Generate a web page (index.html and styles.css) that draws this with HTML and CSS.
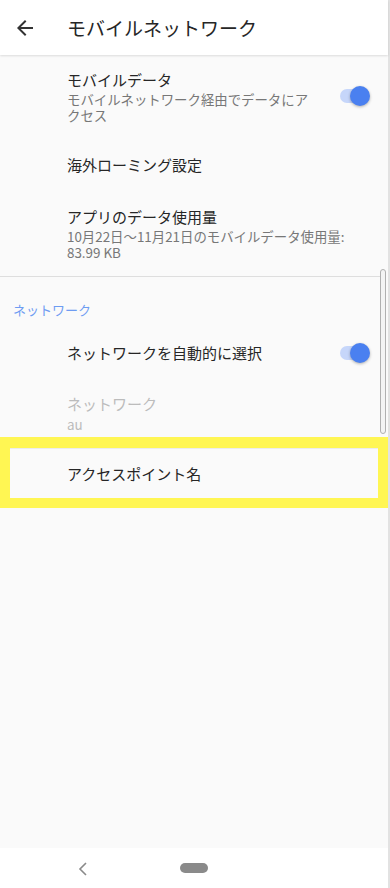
FILE: index.html
```html
<!DOCTYPE html>
<html>

<head>
    <meta charset="utf-8">
    <title>モバイルネットワーク</title>
    <link rel="stylesheet" href="styles.css">
</head>

<body>
<div class="page">
    <div class="toolbar">
        <svg class="back" width="24" height="24" viewBox="0 0 24 24">
            <path d="M20 11H7.83l5.59-5.59L12 4l-8 8 8 8 1.41-1.41L7.83 13H20v-2z" fill="#333"/>
        </svg>
        <div class="toolbar-title">モバイルネットワーク</div>
    </div>

    <div class="content">
        <!-- モバイルデータ -->
        <div class="row row-two">
            <div class="text">
                <div class="title">モバイルデータ</div>
                <div class="summary">モバイルネットワーク経由でデータにアクセス</div>
            </div>
            <div class="switch"><span class="track"></span><span class="thumb"></span></div>
        </div>
        <div class="row row-one">
            <div class="text">
                <div class="title">海外ローミング設定</div>
            </div>
        </div>
        <div class="row row-usage">
            <div class="text">
                <div class="title">アプリのデータ使用量</div>
                <div class="summary wide">10月22日～11月21日のモバイルデータ使用量: 83.99 KB</div>
            </div>
        </div>

        <div class="divider"></div>

        <!-- ネットワーク -->
        <div class="category">ネットワーク</div>
        <div class="row row-one">
            <div class="text">
                <div class="title">ネットワークを自動的に選択</div>
            </div>
            <div class="switch"><span class="track"></span><span class="thumb"></span></div>
        </div>
        <div class="row row-disabled">
            <div class="text">
                <div class="title">ネットワーク</div>
                <div class="summary">au</div>
            </div>
        </div>
        <div class="highlight">
            <div class="highlight-inner">アクセスポイント名</div>
        </div>

        <div class="scrollbar"></div>
    </div>

    <div class="navbar">
        <svg class="nav-back" width="12" height="14" viewBox="0 0 12 14">
            <polyline points="9,1 3,7 9,13" fill="none" stroke="#8a8a8a" stroke-width="1.6"/>
        </svg>
        <span class="home-pill"></span>
    </div>
</div>
</body>

</html>
```

FILE: styles.css
```css
* {
    margin: 0;
    padding: 0;
    box-sizing: border-box;
}
body {
    font-family: "Noto Sans CJK JP", "Noto Sans", Roboto, sans-serif;
    background: #fafafa;
}
.page {
    width: 390px;
    height: 888px;
    display: flex;
    flex-direction: column;
    border-right: 2px solid #e2e2e2;
    background: #fafafa;
}
.toolbar {
    height: 55px;
    flex-shrink: 0;
    background: #fff;
    display: flex;
    align-items: center;
    box-shadow: 0 1px 2px rgba(0, 0, 0, 0.12);
    position: relative;
    z-index: 1;
}
.back {
    margin-left: 13px;
    margin-top: 0;
}
.toolbar-title {
    margin-left: 30px;
    font-size: 19px;
    color: #262626;
    line-height: 24px;
}
.content {
    flex: 1;
    position: relative;
}
.row {
    display: flex;
    align-items: center;
    padding: 0 16px 0 67px;
}
.row-two {
    padding-top: 14px;
    padding-bottom: 14px;
}
.row-one {
    height: 56px;
}
.row-usage {
    padding-top: 13px;
    padding-bottom: 16px;
}
.row-disabled {
    padding-top: 12px;
    padding-bottom: 4px;
}
.text {
    flex: 1;
}
.title {
    font-size: 15px;
    line-height: 22px;
    color: #262626;
}
.summary {
    font-size: 13.4px;
    line-height: 16px;
    color: #777;
    width: 250px;
}
.summary.wide {
    width: 290px;
}
.row-disabled .title {
    color: #bcbcbc;
}
.row-disabled .summary {
    color: #bcbcbc;
    line-height: 18px;
}
.switch {
    position: relative;
    width: 32px;
    height: 20px;
    flex-shrink: 0;
}
.track {
    position: absolute;
    left: 0;
    top: 3px;
    width: 28px;
    height: 14px;
    border-radius: 7px;
    background: #c6d6fa;
}
.thumb {
    position: absolute;
    right: 2px;
    top: 0;
    width: 20px;
    height: 20px;
    border-radius: 50%;
    background: #4a80f0;
    box-shadow: 0 1px 3px rgba(0, 0, 0, 0.3);
}
.divider {
    height: 1px;
    background: #dedede;
    margin-right: 8px;
}
.category {
    padding: 24px 0 6px 13px;
    font-size: 13px;
    line-height: 18px;
    color: #6e9cf2;
}
.highlight {
    border: 10px solid #fff653;
    border-top-width: 11px;
    height: 71px;
}
.highlight-inner {
    height: 100%;
    background: #fafafa;
    border-top: 1px solid #ececec;
    display: flex;
    align-items: center;
    padding-left: 57px;
    font-size: 15px;
    color: #262626;
}
.scrollbar {
    position: absolute;
    left: 380px;
    top: 214px;
    width: 6px;
    height: 165px;
    border: 1px solid #b0b0b0;
    border-radius: 3px;
    background: #f4f4f4;
}
.navbar {
    height: 40px;
    flex-shrink: 0;
    background: #fff;
    display: flex;
    align-items: center;
    padding-left: 77px;
}
.nav-back {
    margin-top: 2px;
}
.home-pill {
    margin-left: 91px;
    width: 28px;
    height: 10px;
    border-radius: 5px;
    background: #8a8a8a;
}
```
